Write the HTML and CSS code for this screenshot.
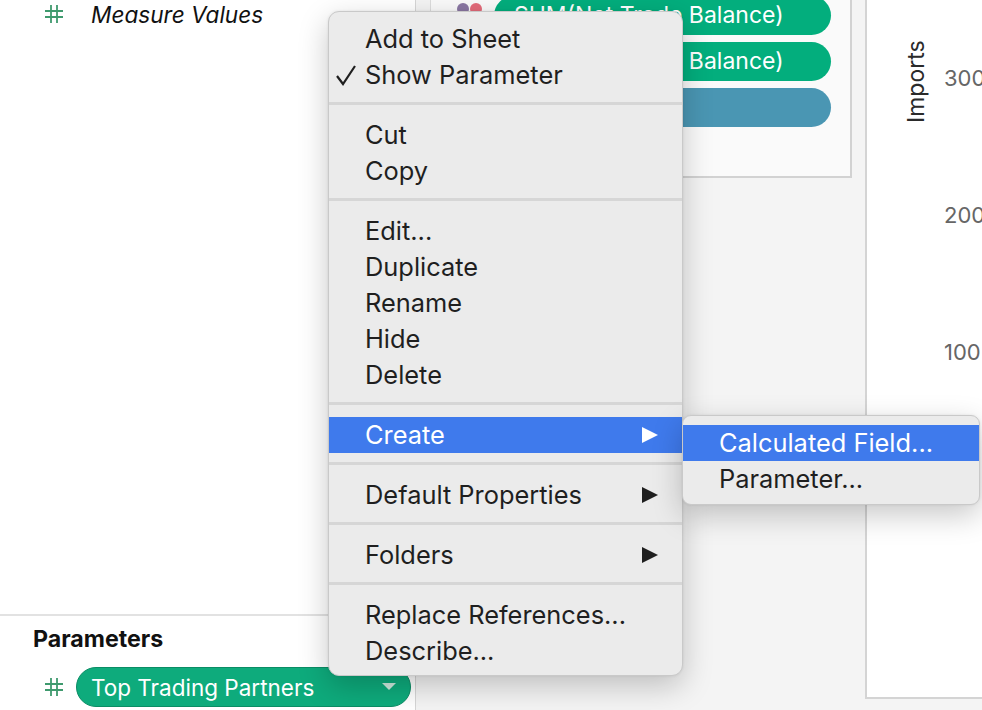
FILE: index.html
```html
<!DOCTYPE html>
<html lang="en">
<head>
<meta charset="utf-8">
<title>Create Calculated Field</title>
<link rel="stylesheet" href="styles.css">
</head>
<body>
<div class="app">
  <aside class="data-pane">
    <div class="fields">
      <div class="field-row">
        <svg class="hash" viewBox="0 0 18 18" width="18" height="18"><path d="M6 0V18M12 0V18M0 6H18M0 12H18" stroke="#3f9a6e" stroke-width="1.8" fill="none"/></svg>
        <span class="field-name">Measure Values</span>
      </div>
    </div>
    <div class="params">
      <div class="params-title">Parameters</div>
      <div class="param-row">
        <svg class="hash" viewBox="0 0 18 18" width="18" height="18"><path d="M6 0V18M12 0V18M0 6H18M0 12H18" stroke="#3f9a6e" stroke-width="1.8" fill="none"/></svg>
        <div class="param-pill">
          <span>Top Trading Partners</span>
          <svg class="caret" viewBox="0 0 14 8" width="14" height="8"><path d="M0 0H14L7 7Z" fill="#cde9dd"/></svg>
        </div>
      </div>
    </div>
  </aside>

  <main class="workspace">
    <div class="shelf-col">
      <div class="shelf">
        <div class="dots">
          <span class="dot purple"></span>
          <span class="dot pink"></span>
        </div>
        <div class="pills">
          <div class="pill green">SUM(Net Trade Balance)</div>
          <div class="pill green">SUM(Net Trade Balance)</div>
          <div class="pill teal"></div>
        </div>
      </div>
    </div>
    <section class="chart">
      <div class="axis-title">Imports</div>
      <div class="ticks">
        <div class="tick">300</div>
        <div class="tick">200</div>
        <div class="tick">100</div>
      </div>
    </section>
  </main>

  <div class="menu">
    <div class="item">Add to Sheet</div>
    <div class="item"><svg class="check" viewBox="0 0 22 22" width="22" height="22"><path d="M2 12L8 20L20 2" stroke="#1f1f1f" stroke-width="2.2" fill="none" stroke-linejoin="miter"/></svg>Show Parameter</div>
    <div class="sep"></div>
    <div class="item">Cut</div>
    <div class="item">Copy</div>
    <div class="sep"></div>
    <div class="item">Edit...</div>
    <div class="item">Duplicate</div>
    <div class="item">Rename</div>
    <div class="item">Hide</div>
    <div class="item">Delete</div>
    <div class="sep"></div>
    <div class="item active sub">Create<span class="arrow"></span></div>
    <div class="sep"></div>
    <div class="item sub">Default Properties<span class="arrow"></span></div>
    <div class="sep"></div>
    <div class="item sub">Folders<span class="arrow"></span></div>
    <div class="sep"></div>
    <div class="item">Replace References...</div>
    <div class="item">Describe...</div>
  </div>

  <div class="menu submenu">
    <div class="item active">Calculated Field...</div>
    <div class="item">Parameter...</div>
  </div>
</div>
</body>
</html>
```

FILE: styles.css
```css
* { box-sizing: border-box; }
html, body { margin: 0; padding: 0; }
body {
  width: 982px;
  height: 710px;
  overflow: hidden;
  font-family: Inter, "Liberation Sans", sans-serif;
  background: #f4f4f4;
}
.app {
  position: relative;
  display: flex;
  width: 982px;
  height: 710px;
}

/* Data pane */
.data-pane {
  width: 416px;
  flex: none;
  display: flex;
  flex-direction: column;
  background: #fff;
  border-right: 1px solid #d6d6d6;
}
.fields { flex: 1; }
.field-row {
  display: flex;
  align-items: center;
  height: 28px;
  padding-left: 45px;
  gap: 28px;
}
.field-name {
  font-size: 22.6px;
  font-style: italic;
  color: #111;
}
.hash { flex: none; }
.params {
  height: 96px;
  border-top: 2px solid #e2e2e2;
  padding-top: 10px;
}
.params-title {
  padding-left: 33px;
  font-size: 23.2px;
  font-weight: 700;
  color: #111;
  line-height: 26px;
}
.param-row {
  display: flex;
  align-items: center;
  margin-top: 15px;
  padding-left: 45px;
  gap: 13px;
}
.param-pill {
  width: 335px;
  height: 40px;
  border-radius: 20px;
  background: #0eab7c;
  border: 1px solid #0b8d65;
  display: flex;
  align-items: center;
  justify-content: space-between;
  padding: 0 14px 0 14px;
  color: #fff;
  font-size: 22.5px;
}

/* Workspace */
.workspace {
  flex: 1;
  display: flex;
  align-items: flex-start;
  background: #f4f4f4;
}
.shelf-col {
  width: 436px;
  padding-left: 14px;
  flex: none;
}
.shelf {
  height: 178px;
  background: #fafafa;
  border-left: 1px solid #dcdcdc;
  border-right: 2px solid #d2d2d2;
  border-bottom: 2px solid #d2d2d2;
  display: flex;
  padding-left: 26px;
}
.dots {
  display: flex;
  gap: 1px;
  margin-top: 3px;
  height: 12px;
}
.dot {
  width: 12px;
  height: 12px;
  border-radius: 50%;
}
.purple { background: #8a77a3; }
.pink { background: #e46b7a; }
.pills {
  display: flex;
  flex-direction: column;
  gap: 7px;
  margin-top: -4px;
  margin-left: 12px;
}
.pill {
  width: 337px;
  height: 39px;
  border-radius: 20px;
  color: #fff;
  font-size: 23px;
  line-height: 39px;
  padding-left: 20px;
  white-space: nowrap;
}
.green { background: #03ae7d; }
.teal { background: #4a96b3; }

.chart {
  flex: 1;
  margin-left: 13px;
  height: 699px;
  background: #fff;
  border-left: 2px solid #d4d4d4;
  border-bottom: 2px solid #d4d4d4;
  display: flex;
  overflow: hidden;
}
.axis-title {
  writing-mode: vertical-rl;
  transform: rotate(180deg);
  font-size: 23px;
  color: #2a2a2a;
  margin-left: 37px;
  margin-top: 38px;
  height: 88px;
  line-height: 24px;
  text-align: center;
}
.ticks {
  margin-left: 16px;
  display: flex;
  flex-direction: column;
  gap: 113px;
  padding-top: 66px;
}
.tick {
  font-size: 22px;
  color: #666;
  line-height: 24px;
  white-space: nowrap;
}

/* Context menu */
.menu {
  position: absolute;
  left: 328px;
  top: 11px;
  width: 355px;
  background: #ebebeb;
  border: 1px solid #c9c9c9;
  border-radius: 11px;
  padding: 9px 0 6px;
  box-shadow: 0 10px 30px rgba(0,0,0,0.22), 0 0 3px rgba(0,0,0,0.08);
  font-size: 25.4px;
  color: #1f1f1f;
}
.item {
  position: relative;
  height: 36px;
  line-height: 36px;
  padding-left: 36px;
  white-space: nowrap;
}
.check {
  position: absolute;
  left: 6px;
  top: 7px;
}
.item.active {
  background: #3f7aec;
  color: #fff;
}
.arrow {
  position: absolute;
  right: 24px;
  top: 10px;
  width: 0;
  height: 0;
  border-left: 16px solid #1f1f1f;
  border-top: 8px solid transparent;
  border-bottom: 8px solid transparent;
}
.item.active .arrow { border-left-color: #fff; }
.sep {
  height: 24px;
  padding-top: 9px;
}
.sep::before {
  content: "";
  display: block;
  height: 3px;
  background: #d6d6d6;
}
.submenu {
  left: 682px;
  top: 415px;
  width: 298px;
  border-radius: 9px;
  padding: 9px 0 7px;
}
```
